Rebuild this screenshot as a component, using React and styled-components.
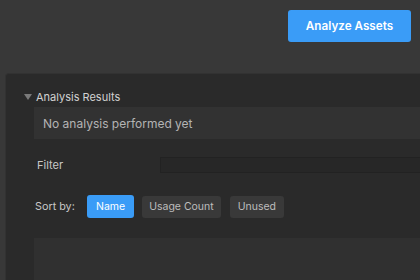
import React, { useState } from 'react'
import styled, { createGlobalStyle } from 'styled-components'

const GlobalStyle = createGlobalStyle`
  html, body {
    margin: 0;
    padding: 0;
    background: #383838;
    overflow: hidden;
  }
  body {
    font-family: Inter, "Noto Sans", sans-serif;
  }
`

const Page = styled.div`
  width: 420px;
  height: 280px;
  display: flex;
  flex-direction: column;
  background: #383838;
  overflow: hidden;
`

const Toolbar = styled.div`
  display: flex;
  justify-content: flex-end;
  padding: 10px 9px 0 0;
  height: 73px;
  flex-shrink: 0;
  box-sizing: border-box;
`

const PrimaryButton = styled.button`
  width: 123px;
  height: 32px;
  border: none;
  border-radius: 3px;
  background: #3a9cf7;
  color: #fff;
  font-family: Inter, sans-serif;
  font-size: 11.7px;
  font-weight: 600;
  cursor: pointer;
`

const Panel = styled.div`
  margin-left: 5px;
  flex: 1;
  background: #2a2a2a;
  border: 1px solid #323232;
  border-right: none;
  border-bottom: none;
  border-radius: 4px 0 0 0;
  padding: 15px 0 0 18px;
  display: flex;
  flex-direction: column;
`

const SectionHeader = styled.div`
  display: flex;
  align-items: center;
  gap: 4px;
  color: #d2d2d2;
  font-size: 11px;
  height: 16px;
`

const Caret = styled.span`
  width: 0;
  height: 0;
  border-left: 4px solid transparent;
  border-right: 4px solid transparent;
  border-top: 6px solid #7a7a7a;
`

const Message = styled.div`
  margin: 2px 0 0 10px;
  height: 32px;
  background: #323232;
  color: #b4b4b4;
  font-size: 12px;
  display: flex;
  align-items: center;
  padding-left: 9px;
`

const FieldRow = styled.div`
  display: flex;
  align-items: center;
  margin: 18px 0 0 13px;
  height: 16px;
`

const Label = styled.span`
  color: #c8c8c8;
  font-size: 11px;
  width: ${p => p.$width}px;
`

const FilterInput = styled.input`
  flex: 1;
  height: 16px;
  box-sizing: border-box;
  background: #272727;
  border: 1px solid #222;
  border-right: none;
  outline: none;
  color: #ccc;
`

const SortRow = styled.div`
  display: flex;
  align-items: center;
  margin: 22px 0 0 11px;
  gap: 8px;
`

const SortLabel = styled.span`
  color: #c8c8c8;
  font-size: 10.8px;
  width: 44px;
`

const SortButton = styled.button`
  height: ${p => (p.$active ? 23 : 22)}px;
  padding: 0 ${p => p.$pad}px;
  margin-left: ${p => p.$gap}px;
  border: none;
  border-radius: 3px;
  background: ${p => (p.$active ? '#3a9cf7' : '#393939')};
  color: ${p => (p.$active ? '#fff' : '#bdbdbd')};
  font-family: Inter, sans-serif;
  font-size: 10.5px;
  cursor: pointer;
`

const ListArea = styled.div`
  margin: 20px 0 0 10px;
  flex: 1;
  background: #303030;
`

const sorts = [
  { key: 'name', label: 'Name', pad: 9, gap: 0 },
  { key: 'usage', label: 'Usage Count', pad: 7, gap: 0 },
  { key: 'unused', label: 'Unused', pad: 8, gap: 1 },
]

const App = () => {
  const [sortBy, setSortBy] = useState('name')
  const [filter, setFilter] = useState('')

  return (
    <Page>
      <GlobalStyle />
      <Toolbar>
        <PrimaryButton>Analyze Assets</PrimaryButton>
      </Toolbar>
      <Panel>
        <SectionHeader>
          <Caret />
          Analysis Results
        </SectionHeader>
        <Message>No analysis performed yet</Message>
        <FieldRow>
          <Label $width={123}>Filter</Label>
          <FilterInput value={filter} onChange={e => setFilter(e.target.value)} />
        </FieldRow>
        <SortRow>
          <SortLabel>Sort by:</SortLabel>
          {sorts.map(s => (
            <SortButton
              key={s.key}
              $active={sortBy === s.key}
              $pad={s.pad}
              $gap={s.gap}
              onClick={() => setSortBy(s.key)}
            >
              {s.label}
            </SortButton>
          ))}
        </SortRow>
        <ListArea />
      </Panel>
    </Page>
  )
}

export default App
